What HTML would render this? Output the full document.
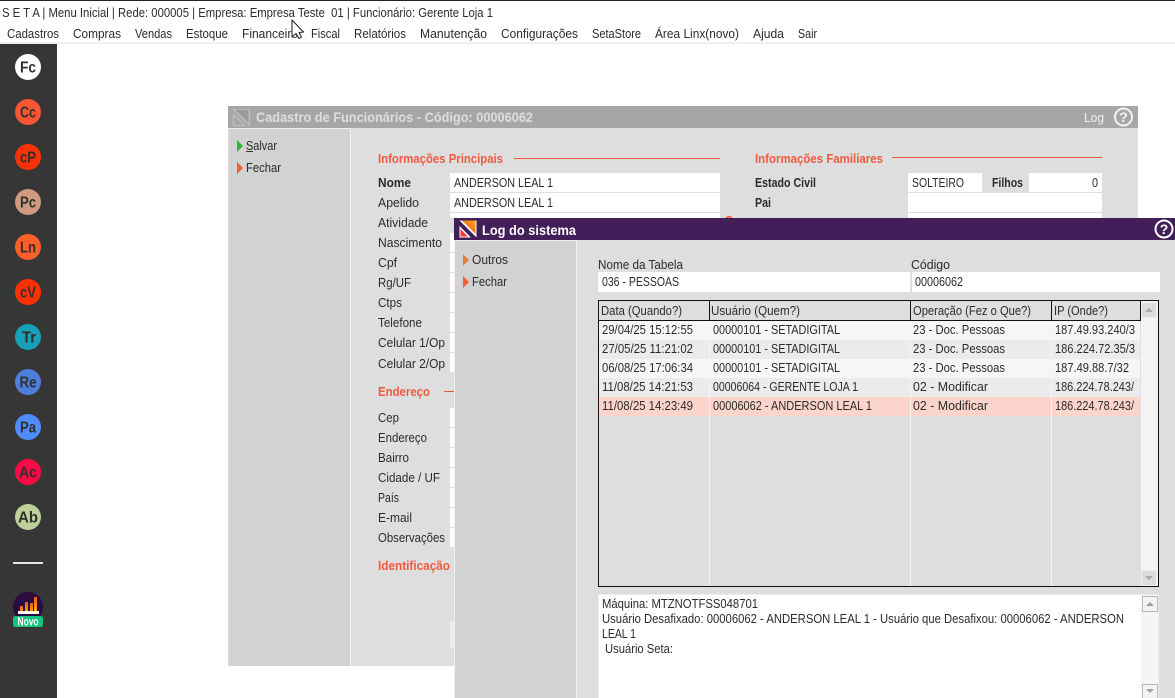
<!DOCTYPE html>
<html lang="pt-BR"><head><meta charset="utf-8"><title>Log do sistema</title>
<style>
html,body{margin:0;padding:0;width:1175px;height:698px;overflow:hidden;background:#fff}
svg{display:block}
text{font-family:"Liberation Sans",sans-serif;font-size:13px;fill:#2b2b2b;white-space:pre}
.b{font-weight:bold}
.h{font-weight:bold;fill:#ef5a3f}
.c{font-weight:bold;font-size:15.500px;fill:#2f2f2f;text-anchor:middle}
</style></head><body>
<svg width="1175" height="698" viewBox="0 0 1175 698" xmlns="http://www.w3.org/2000/svg">
<defs>
<linearGradient id="g" x1="0" y1="1" x2="1" y2="0"><stop offset="0" stop-color="#f0452a"/><stop offset="1" stop-color="#fbab12"/></linearGradient>
<linearGradient id="bar" x1="0" y1="1" x2="0" y2="0"><stop offset="0" stop-color="#fdb614"/><stop offset="1" stop-color="#ee5b1f"/></linearGradient>
</defs>
<rect width="1175" height="698" fill="#fff"/>
<rect width="1175" height="1" fill="#222"/>
<rect y="42" width="1175" height="2" fill="#f0f0f0"/>
<text x="2" y="17" textLength="491" lengthAdjust="spacingAndGlyphs">S E T A | Menu Inicial | Rede: 000005 | Empresa: Empresa Teste  01 | Funcionário: Gerente Loja 1</text>
<text x="7" y="38" textLength="52" lengthAdjust="spacingAndGlyphs">Cadastros</text>
<text x="73" y="38" textLength="48" lengthAdjust="spacingAndGlyphs">Compras</text>
<text x="135" y="38" textLength="37" lengthAdjust="spacingAndGlyphs">Vendas</text>
<text x="186" y="38" textLength="42" lengthAdjust="spacingAndGlyphs">Estoque</text>
<text x="242" y="38" textLength="56" lengthAdjust="spacingAndGlyphs">Financeiro</text>
<text x="311" y="38" textLength="29" lengthAdjust="spacingAndGlyphs">Fiscal</text>
<text x="354" y="38" textLength="52" lengthAdjust="spacingAndGlyphs">Relatórios</text>
<text x="420" y="38" textLength="67" lengthAdjust="spacingAndGlyphs">Manutenção</text>
<text x="501" y="38" textLength="77" lengthAdjust="spacingAndGlyphs">Configurações</text>
<text x="592" y="38" textLength="49" lengthAdjust="spacingAndGlyphs">SetaStore</text>
<text x="655" y="38" textLength="84" lengthAdjust="spacingAndGlyphs">Área Linx(novo)</text>
<text x="753" y="38" textLength="31" lengthAdjust="spacingAndGlyphs">Ajuda</text>
<text x="798" y="38" textLength="19" lengthAdjust="spacingAndGlyphs">Sair</text>

<!-- sidebar -->
<rect x="0" y="44" width="57" height="654" fill="#363636"/>
<circle cx="28" cy="67" r="13" fill="#fff"/><text x="28" y="72.500" class="c" textLength="16" lengthAdjust="spacingAndGlyphs">Fc</text>
<circle cx="28" cy="112" r="13" fill="#fb5532"/><text x="28" y="117.500" class="c" textLength="16" lengthAdjust="spacingAndGlyphs">Cc</text>
<circle cx="28" cy="157" r="13" fill="#fb3207"/><text x="28" y="162.500" class="c" textLength="16" lengthAdjust="spacingAndGlyphs">cP</text>
<circle cx="28" cy="202" r="13" fill="#cf9a80"/><text x="28" y="207.500" class="c" textLength="16" lengthAdjust="spacingAndGlyphs">Pc</text>
<circle cx="28" cy="247" r="13" fill="#fb6027"/><text x="28" y="252.500" class="c" textLength="16" lengthAdjust="spacingAndGlyphs">Ln</text>
<circle cx="28" cy="292" r="13" fill="#fb3200"/><text x="28" y="297.500" class="c" textLength="16" lengthAdjust="spacingAndGlyphs">cV</text>
<circle cx="28" cy="337" r="13" fill="#17a0b8"/><text x="29" y="342.500" class="c" textLength="14" lengthAdjust="spacingAndGlyphs">Tr</text>
<circle cx="28" cy="382" r="13" fill="#4f7fdb"/><text x="28" y="387.500" class="c" textLength="17" lengthAdjust="spacingAndGlyphs">Re</text>
<circle cx="28" cy="427" r="13" fill="#4f8dfb"/><text x="28" y="432.500" class="c" textLength="16" lengthAdjust="spacingAndGlyphs">Pa</text>
<circle cx="28" cy="472" r="13" fill="#fb0a46"/><text x="28" y="477.500" class="c" textLength="18" lengthAdjust="spacingAndGlyphs">Ac</text>
<circle cx="28" cy="517" r="13" fill="#c0d09a"/><text x="28" y="522.500" class="c" textLength="20" lengthAdjust="spacingAndGlyphs">Ab</text>
<rect x="13" y="562" width="30" height="2" fill="#e6e6e6"/>
<circle cx="28" cy="607" r="15" fill="#2c0b3e"/>
<rect x="20" y="606" width="3" height="8" fill="url(#bar)"/>
<rect x="25" y="602" width="3" height="12" fill="url(#bar)"/>
<rect x="30" y="603" width="3" height="11" fill="url(#bar)"/>
<rect x="34" y="597" width="3" height="17" fill="url(#bar)"/>
<rect x="18" y="611" width="21" height="3" fill="#fff" opacity=".95"/>
<rect x="13" y="616" width="30" height="11" rx="2.500" fill="#12c47e"/>
<text x="28" y="625.500" text-anchor="middle" style="font-size:11.500px;font-weight:bold;fill:#fff" textLength="21" lengthAdjust="spacingAndGlyphs">Novo</text>

<!-- main window -->
<rect x="228" y="106" width="910" height="560" fill="#dedede"/>
<rect x="228" y="106" width="910" height="22" fill="#a6a6a6"/>
<rect x="229" y="129" width="121" height="537" fill="#d2d2d2"/>
<rect x="229" y="128" width="122" height="1" fill="#efefef"/>
<rect x="350" y="128" width="1" height="538" fill="#efefef"/>
<g fill="none" stroke="#bdbdbd" stroke-width="1.300"><path d="M233.500 109.500H249.500V125.500ZM233.500 114.500 244.500 125.500H233.500Z"/></g>
<path d="M236 109.500 248 121.500V110Z" fill="#9a9a9a"/>
<text x="256" y="122" class="b" style="font-size:14px;fill:#dedede" textLength="277" lengthAdjust="spacingAndGlyphs">Cadastro de Funcionários - Código: 00006062</text>
<text x="1084" y="122" style="fill:#f0f0f0" textLength="20" lengthAdjust="spacingAndGlyphs">Log</text>
<circle cx="1123.500" cy="117" r="8.500" fill="none" stroke="#f2f2f2" stroke-width="2"/>
<text x="1123.500" y="122" text-anchor="middle" style="font-size:14px;font-weight:bold;fill:#f2f2f2">?</text>

<path d="M237 140 243 146 237 152Z" fill="#2db82d"/>
<text x="246" y="150" textLength="31" lengthAdjust="spacingAndGlyphs">Salvar</text><rect x="246" y="151" width="7" height="1" fill="#333"/>
<path d="M237 162 243 168 237 174Z" fill="#f0602d"/>
<text x="246" y="172" textLength="35" lengthAdjust="spacingAndGlyphs">Fechar</text>

<text x="378" y="163" class="h" textLength="125" lengthAdjust="spacingAndGlyphs">Informações Principais</text>
<rect x="514" y="158" width="206" height="1" fill="#f0553a"/>
<text x="755" y="163" class="h" textLength="128" lengthAdjust="spacingAndGlyphs">Informações Familiares</text>
<rect x="892" y="157" width="210" height="1" fill="#e8573c"/>

<!-- form fields -->
<g fill="#fff">
<rect x="450" y="173" width="270" height="19"/><rect x="450" y="193" width="270" height="19"/>
<rect x="450" y="213" width="270" height="5"/>
<rect x="450" y="233" width="4" height="19"/><rect x="450" y="253" width="4" height="19"/><rect x="450" y="273" width="4" height="19"/><rect x="450" y="293" width="4" height="19"/><rect x="450" y="313" width="4" height="19"/><rect x="450" y="333" width="4" height="19"/><rect x="450" y="353" width="4" height="19"/>
<rect x="450" y="408" width="4" height="19"/><rect x="450" y="428" width="4" height="19"/><rect x="450" y="448" width="4" height="19"/><rect x="450" y="468" width="4" height="19"/><rect x="450" y="488" width="4" height="19"/><rect x="450" y="508" width="4" height="19"/><rect x="450" y="528" width="4" height="19"/>
<rect x="908" y="173" width="74" height="19"/><rect x="1029" y="173" width="73" height="19"/><rect x="908" y="193" width="194" height="19"/><rect x="908" y="213" width="194" height="5"/>
</g>
<rect x="450" y="621" width="4" height="27" fill="#ececec"/>
<path d="M726 218.500a3.500 3.500 0 0 1 6 0" fill="none" stroke="#ef5a3f" stroke-width="1.500"/>

<text x="378" y="187" class="b" textLength="33" lengthAdjust="spacingAndGlyphs">Nome</text>
<text x="378" y="207" textLength="41" lengthAdjust="spacingAndGlyphs">Apelido</text>
<text x="378" y="227" textLength="50" lengthAdjust="spacingAndGlyphs">Atividade</text>
<text x="378" y="247" textLength="64" lengthAdjust="spacingAndGlyphs">Nascimento</text>
<text x="378" y="267" textLength="19" lengthAdjust="spacingAndGlyphs">Cpf</text>
<text x="378" y="287" textLength="33" lengthAdjust="spacingAndGlyphs">Rg/UF</text>
<text x="378" y="307" textLength="24" lengthAdjust="spacingAndGlyphs">Ctps</text>
<text x="378" y="327" textLength="44" lengthAdjust="spacingAndGlyphs">Telefone</text>
<text x="378" y="347" textLength="67" lengthAdjust="spacingAndGlyphs">Celular 1/Op</text>
<text x="378" y="368" textLength="67" lengthAdjust="spacingAndGlyphs">Celular 2/Op</text>
<text x="378" y="396" class="h" textLength="52" lengthAdjust="spacingAndGlyphs">Endereço</text>
<rect x="444" y="391" width="10" height="1" fill="#e8573c"/>
<text x="378" y="422" textLength="21" lengthAdjust="spacingAndGlyphs">Cep</text>
<text x="378" y="442" textLength="49" lengthAdjust="spacingAndGlyphs">Endereço</text>
<text x="378" y="462" textLength="31" lengthAdjust="spacingAndGlyphs">Bairro</text>
<text x="378" y="482" textLength="62" lengthAdjust="spacingAndGlyphs">Cidade / UF</text>
<text x="378" y="502" textLength="21" lengthAdjust="spacingAndGlyphs">País</text>
<text x="378" y="522" textLength="34" lengthAdjust="spacingAndGlyphs">E-mail</text>
<text x="378" y="542" textLength="67" lengthAdjust="spacingAndGlyphs">Observações</text>
<text x="378" y="570" class="h" textLength="72" lengthAdjust="spacingAndGlyphs">Identificação</text>
<text x="454" y="187" textLength="99" lengthAdjust="spacingAndGlyphs">ANDERSON LEAL 1</text>
<text x="454" y="207" textLength="99" lengthAdjust="spacingAndGlyphs">ANDERSON LEAL 1</text>
<text x="755" y="187" class="b" textLength="61" lengthAdjust="spacingAndGlyphs">Estado Civil</text>
<text x="755" y="207" class="b" textLength="16" lengthAdjust="spacingAndGlyphs">Pai</text>
<text x="912" y="187" textLength="52" lengthAdjust="spacingAndGlyphs">SOLTEIRO</text>
<text x="992" y="187" class="b" textLength="31" lengthAdjust="spacingAndGlyphs">Filhos</text>
<text x="1092" y="187" textLength="6" lengthAdjust="spacingAndGlyphs">0</text>

<!-- log window -->
<rect x="454" y="218" width="721" height="480" fill="#dedede"/>
<rect x="454" y="218" width="721" height="22" fill="#431f5a"/>
<rect x="454" y="240" width="1" height="458" fill="#f0f0f0"/>
<rect x="455" y="241" width="121" height="457" fill="#d2d2d2"/>
<rect x="455" y="240" width="122" height="1" fill="#efefef"/>
<rect x="576" y="240" width="1" height="458" fill="#efefef"/>
<path d="M459.500 220.500H476.500V237.500Z" fill="#fff"/>
<path d="M462 220.500H475.500V234Z" fill="url(#g)"/>
<path d="M459.500 226 471 237.500H459.500Z" fill="#fff"/>
<path d="M460.500 229 468 236.500H460.500Z" fill="#ef3f2e"/>
<text x="482" y="235" class="b" style="font-size:14px;fill:#fff" textLength="94" lengthAdjust="spacingAndGlyphs">Log do sistema</text>
<circle cx="1164" cy="229" r="8.500" fill="none" stroke="#fff" stroke-width="2"/>
<text x="1164" y="234" text-anchor="middle" style="font-size:14px;font-weight:bold;fill:#fff">?</text>

<path d="M463 254 469 260 463 266Z" fill="#e0803f"/>
<text x="472" y="264" textLength="36" lengthAdjust="spacingAndGlyphs">Outros</text>
<path d="M463 276 469 282 463 288Z" fill="#f0602d"/>
<text x="472" y="286" textLength="35" lengthAdjust="spacingAndGlyphs">Fechar</text>

<text x="598" y="269" textLength="85" lengthAdjust="spacingAndGlyphs">Nome da Tabela</text>
<text x="911" y="269" textLength="39" lengthAdjust="spacingAndGlyphs">Código</text>
<rect x="598" y="272" width="312" height="20" fill="#fff"/>
<rect x="912" y="272" width="248" height="20" fill="#fff"/>
<text x="602" y="286" textLength="77" lengthAdjust="spacingAndGlyphs">036 - PESSOAS</text>
<text x="915" y="286" textLength="48" lengthAdjust="spacingAndGlyphs">00006062</text>

<!-- grid -->
<rect x="598" y="300" width="561" height="287" fill="#dedede"/>
<rect x="599" y="321" width="541" height="19" fill="#f6f6f6"/>
<rect x="599" y="340" width="541" height="19" fill="#ebebeb"/>
<rect x="599" y="359" width="541" height="19" fill="#f6f6f6"/>
<rect x="599" y="378" width="541" height="19" fill="#ebebeb"/>
<rect x="599" y="397" width="541" height="19" fill="#fbd5cc"/>
<g fill="#f4f4f4">
<rect x="709" y="321" width="1" height="265"/><rect x="910" y="321" width="1" height="265"/><rect x="1051" y="321" width="1" height="265"/>
</g>
<rect x="1141" y="301" width="17" height="285" fill="#f3f3f3"/>
<rect x="1141.500" y="302.500" width="15" height="15" fill="#dcdcdc" stroke="#f0f0f0"/>
<path d="M1145 312H1153L1149 308Z" fill="#a8a8a8"/>
<rect x="1141.500" y="570.500" width="15" height="15" fill="#dcdcdc" stroke="#f0f0f0"/>
<path d="M1145 576H1153L1149 580Z" fill="#a8a8a8"/>
<g fill="#111">
<rect x="598" y="300" width="561" height="1"/><rect x="598" y="586" width="561" height="1"/><rect x="598" y="300" width="1" height="287"/><rect x="1158" y="300" width="1" height="287"/>
<rect x="598" y="320" width="543" height="1"/>
<rect x="709" y="300" width="1" height="21"/><rect x="910" y="300" width="1" height="21"/><rect x="1051" y="300" width="1" height="21"/><rect x="1140" y="300" width="1" height="21"/>
</g>
<text x="601" y="315" textLength="81" lengthAdjust="spacingAndGlyphs">Data (Quando?)</text>
<text x="711" y="315" textLength="89" lengthAdjust="spacingAndGlyphs">Usuário (Quem?)</text>
<text x="913" y="315" textLength="118" lengthAdjust="spacingAndGlyphs">Operação (Fez o Que?)</text>
<text x="1054" y="315" textLength="54" lengthAdjust="spacingAndGlyphs">IP (Onde?)</text>

<text x="602" y="334" textLength="91" lengthAdjust="spacingAndGlyphs">29/04/25 15:12:55</text>
<text x="713" y="334" textLength="127" lengthAdjust="spacingAndGlyphs">00000101 - SETADIGITAL</text>
<text x="913" y="334" textLength="92" lengthAdjust="spacingAndGlyphs">23 - Doc. Pessoas</text>
<text x="1055" y="334" textLength="80" lengthAdjust="spacingAndGlyphs">187.49.93.240/3</text>
<text x="602" y="353" textLength="91" lengthAdjust="spacingAndGlyphs">27/05/25 11:21:02</text>
<text x="713" y="353" textLength="127" lengthAdjust="spacingAndGlyphs">00000101 - SETADIGITAL</text>
<text x="913" y="353" textLength="92" lengthAdjust="spacingAndGlyphs">23 - Doc. Pessoas</text>
<text x="1055" y="353" textLength="80" lengthAdjust="spacingAndGlyphs">186.224.72.35/3</text>
<text x="602" y="372" textLength="91" lengthAdjust="spacingAndGlyphs">06/08/25 17:06:34</text>
<text x="713" y="372" textLength="127" lengthAdjust="spacingAndGlyphs">00000101 - SETADIGITAL</text>
<text x="913" y="372" textLength="92" lengthAdjust="spacingAndGlyphs">23 - Doc. Pessoas</text>
<text x="1055" y="372" textLength="74" lengthAdjust="spacingAndGlyphs">187.49.88.7/32</text>
<text x="602" y="391" textLength="91" lengthAdjust="spacingAndGlyphs">11/08/25 14:21:53</text>
<text x="713" y="391" textLength="145" lengthAdjust="spacingAndGlyphs">00006064 - GERENTE LOJA 1</text>
<text x="913" y="391" textLength="75" lengthAdjust="spacingAndGlyphs">02 - Modificar</text>
<text x="1055" y="391" textLength="79" lengthAdjust="spacingAndGlyphs">186.224.78.243/</text>
<text x="602" y="410" textLength="91" lengthAdjust="spacingAndGlyphs">11/08/25 14:23:49</text>
<text x="713" y="410" textLength="159" lengthAdjust="spacingAndGlyphs">00006062 - ANDERSON LEAL 1</text>
<text x="913" y="410" textLength="75" lengthAdjust="spacingAndGlyphs">02 - Modificar</text>
<text x="1055" y="410" textLength="79" lengthAdjust="spacingAndGlyphs">186.224.78.243/</text>

<!-- memo -->
<rect x="598.500" y="594.500" width="560" height="104" fill="#fff" stroke="#ececec"/>
<rect x="1141" y="595" width="17" height="103" fill="#f4f4f4"/>
<rect x="1142.500" y="596.500" width="15" height="15" fill="#f2f2f2" stroke="#b8b8b8"/>
<path d="M1146 606H1154L1150 602Z" fill="#a0a0a0"/>
<rect x="1142.500" y="684.500" width="15" height="14" fill="#f2f2f2" stroke="#b8b8b8"/>
<path d="M1146 689H1154L1150 693Z" fill="#a0a0a0"/>
<text x="602" y="608" textLength="156" lengthAdjust="spacingAndGlyphs">Máquina: MTZNOTFSS048701</text>
<text x="602" y="623" textLength="522" lengthAdjust="spacingAndGlyphs">Usuário Desafixado: 00006062 - ANDERSON LEAL 1 - Usuário que Desafixou: 00006062 - ANDERSON</text>
<text x="602" y="638" textLength="34" lengthAdjust="spacingAndGlyphs">LEAL 1</text>
<text x="605" y="653" textLength="68" lengthAdjust="spacingAndGlyphs">Usuário Seta:</text>

<!-- cursor -->
<path d="M292 20 292 37 296 33.500 299 38.500 301.500 37 299 32.500 303.500 32Z" fill="#fff" stroke="#1a1a1a" stroke-width="1" stroke-linejoin="round"/>
</svg>
</body></html>
